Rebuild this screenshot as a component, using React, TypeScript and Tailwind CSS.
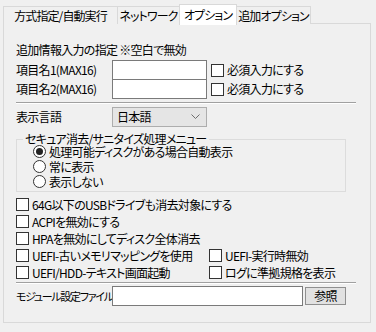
import React from 'react';

const font = "font-['Noto_Sans_CJK_JP','Noto_Sans',sans-serif] [font-feature-settings:'palt']";

const Check: React.FC<{ label: string; className?: string }> = ({ label, className }) => (
    <div className={`flex items-center h-full ${className ?? ''}`}>
        <span className="w-[13px] h-[13px] border border-[#333333] bg-white shrink-0"></span>
        <span className="ml-[3px] whitespace-nowrap">{label}</span>
    </div>
);

const Radio: React.FC<{ label: string; checked?: boolean }> = ({ label, checked }) => (
    <div className="flex items-center h-[15px] pl-[16px]">
        <span className="w-[13px] h-[13px] rounded-full border border-[#333333] bg-white flex items-center justify-center shrink-0">
            {checked && <span className="w-[7px] h-[7px] rounded-full bg-[#222222]"></span>}
        </span>
        <span className="ml-[3px] whitespace-nowrap">{label}</span>
    </div>
);

const Separator = () => (
    <div className="w-[340px] flex flex-col">
        <div className="h-px bg-[#a0a0a0]"></div>
        <div className="h-px bg-white"></div>
    </div>
);

const App: React.FC = () => {
    const tabs = [
        { label: '方式指定/自動実行', w: 'w-[115px]' },
        { label: 'ネットワーク', w: 'w-[63px]' },
        { label: 'オプション', w: 'w-[58px]', active: true },
        { label: '追加オプション', w: 'w-[75px]' },
    ];

    return (
        <div className={`w-[376px] h-[332px] bg-[#f0f0f0] text-[12px] leading-none tracking-[-0.7px] text-black overflow-hidden ${font}`}>
            {/* Tab strip */}
            <div className="flex items-end h-[24px] pl-[3px]">
                {tabs.map(t => (
                    <div
                        key={t.label}
                        className={`${t.w} shrink-0 flex items-center justify-center border border-[#d9d9d9] border-b-0 whitespace-nowrap tracking-[-0.9px]
                            ${t.active ? 'h-[21px] bg-white relative z-10 -mb-px -ml-px' : 'h-[18px] bg-[#f0f0f0] -ml-px first:ml-0'}
                        `}
                    >
                        {t.label}
                    </div>
                ))}
            </div>

            {/* Panel */}
            <div className="ml-[3px] -mt-px w-[368px] h-[300px] border border-[#d9d9d9] bg-[#f0f0f0] pl-[12px] flex flex-col">
                <div className="h-[16px] mt-[18px] flex items-center">追加情報入力の指定 ※空白で無効</div>

                <div className="h-[20px] mt-[2px] flex items-center">
                    <span className="w-[96px] shrink-0">項目名1(MAX16)</span>
                    <div className="w-[95px] h-[20px] border border-[#7a7a7a] bg-white shrink-0"></div>
                    <Check label="必須入力にする" className="ml-[4px]" />
                </div>
                <div className="h-[20px] -mt-px flex items-center">
                    <span className="w-[96px] shrink-0">項目名2(MAX16)</span>
                    <div className="w-[95px] h-[20px] border border-[#7a7a7a] bg-white shrink-0"></div>
                    <Check label="必須入力にする" className="ml-[4px]" />
                </div>

                <div className="mt-[3px]"><Separator /></div>

                <div className="h-[20px] mt-[3px] flex items-center">
                    <span className="w-[96px] shrink-0">表示言語</span>
                    <div className="w-[95px] h-[20px] border border-[#adadad] bg-[#e5e5e5] flex items-center justify-between pl-[4px] pr-[6px]">
                        <span>日本語</span>
                        <svg width="9" height="6" viewBox="0 0 9 6" fill="none" stroke="#6d6d6d" strokeWidth="1">
                            <path d="M0.5 0.5 L4.5 4.5 L8.5 0.5" />
                        </svg>
                    </div>
                </div>

                {/* Group box */}
                <div className="relative mt-[12px] w-[330px] h-[53px] border border-[#dcdcdc] pt-[4px]">
                    <span className="absolute -top-[7px] left-[6px] px-[2px] bg-[#f0f0f0] h-[12px] flex items-center whitespace-nowrap">セキュア消去/サニタイズ処理メニュー</span>
                    <Radio label="処理可能ディスクがある場合自動表示" checked />
                    <Radio label="常に表示" />
                    <Radio label="表示しない" />
                </div>

                <div className="mt-[4px] flex flex-col">
                    <div className="h-[17px]"><Check label="64G以下のUSBドライブも消去対象にする" /></div>
                    <div className="h-[17px]"><Check label="ACPIを無効にする" /></div>
                    <div className="h-[17px]"><Check label="HPAを無効にしてディスク全体消去" /></div>
                    <div className="h-[17px] grid grid-cols-[193px_auto]">
                        <Check label="UEFI-古いメモリマッピングを使用" />
                        <Check label="UEFI-実行時無効" />
                    </div>
                    <div className="h-[17px] grid grid-cols-[193px_auto]">
                        <Check label="UEFI/HDD-テキスト画面起動" />
                        <Check label="ログに準拠規格を表示" />
                    </div>
                </div>

                <div className="mt-px"><Separator /></div>

                <div className="h-[20px] mt-[2px] flex items-center">
                    <span className="w-[96px] shrink-0 whitespace-nowrap text-[11px] tracking-[-1.3px]">モジュール設定ファイル</span>
                    <div className="w-[191px] h-[20px] border border-[#7a7a7a] bg-white shrink-0"></div>
                    <button className="ml-[2px] w-[41px] h-[18px] border border-[#8f8f8f] bg-[#e1e1e1] flex items-center justify-center">参照</button>
                </div>
            </div>
        </div>
    );
};

export default App;
